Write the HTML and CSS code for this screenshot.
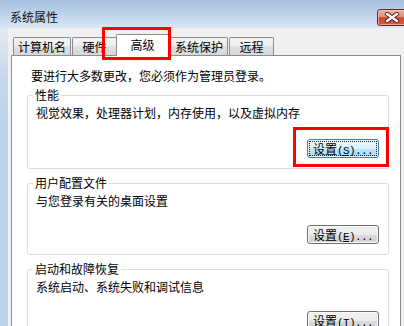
FILE: index.html
```html
<!DOCTYPE html>
<html lang="zh-CN">
<head>
<meta charset="utf-8">
<title>系统属性</title>
<link rel="stylesheet" href="styles.css">
</head>
<body>
<div class="window">
  <header class="titlebar">
    <span class="title">系统属性</span>
    <button class="close" aria-label="关闭">
      <svg width="28" height="15" viewBox="0 0 28 15">
        <path d="M9 4 L19 11 M19 4 L9 11" stroke="#5a1e14" stroke-width="4" stroke-linecap="round"/>
        <path d="M9 4 L19 11 M19 4 L9 11" stroke="#ffffff" stroke-width="2.2" stroke-linecap="round"/>
      </svg>
    </button>
  </header>
  <div class="frame">
    <div class="frame-edge"></div>
    <div class="client">
      <div class="tabs">
        <div class="tab">计算机名</div>
        <div class="tab">硬件</div>
        <div class="tab active">高级</div>
        <div class="tab">系统保护</div>
        <div class="tab">远程</div>
      </div>
      <div class="panel">
        <p class="intro">要进行大多数更改，您必须作为管理员登录。</p>
        <fieldset class="group group-perf">
          <legend>性能</legend>
          <p>视觉效果，处理器计划，内存使用，以及虚拟内存</p>
          <div class="actions"><button class="btn default">设置<span class="acc">(<u>S</u>)...</span></button></div>
        </fieldset>
        <fieldset class="group">
          <legend>用户配置文件</legend>
          <p>与您登录有关的桌面设置</p>
          <div class="actions"><button class="btn">设置<span class="acc">(<u>E</u>)...</span></button></div>
        </fieldset>
        <fieldset class="group">
          <legend>启动和故障恢复</legend>
          <p>系统启动、系统失败和调试信息</p>
          <div class="actions"><button class="btn">设置<span class="acc">(<u>T</u>)...</span></button></div>
        </fieldset>
      </div>
    </div>
  </div>
  <div class="highlight hl-tab"></div>
  <div class="highlight hl-btn"></div>
</div>
</body>
</html>
```

FILE: styles.css
```css
html, body {
  margin: 0;
  padding: 0;
}

body {
  width: 404px;
  height: 326px;
  overflow: hidden;
  font-family: "Noto Sans CJK SC", "Noto Sans", sans-serif;
  font-size: 12px;
  line-height: 14px;
  color: #000;
  background: #f0f0f0;
}

.window {
  position: relative;
  height: 326px;
  display: flex;
  flex-direction: column;
}

.titlebar {
  height: 28px;
  flex: none;
  display: flex;
  align-items: flex-start;
  background: linear-gradient(to bottom, #a4bfdf 0%, #c2d5eb 55%, #d9e5f2 100%);
}

.title {
  padding: 10px 0 0 10px;
  line-height: 14px;
  color: #111;
}

.close {
  margin: 9px -3px 0 auto;
  width: 30px;
  height: 17px;
  padding: 0;
  box-sizing: border-box;
  border: 1px solid #6b2a1e;
  border-radius: 3px;
  background: linear-gradient(to bottom, #eab1a3 0%, #df8e7c 45%, #c8482f 52%, #d4604a 100%);
  box-shadow: inset 0 0 0 1px rgba(255, 210, 200, 0.55);
  display: flex;
  align-items: center;
  justify-content: center;
}

.close svg {
  display: block;
}

.frame {
  flex: 1;
  display: flex;
  min-height: 0;
}

.frame-edge {
  width: 8px;
  flex: none;
  background: linear-gradient(to bottom, #e6eaef 0px, #c6d8ec 50px, #b9d1ea 110px, #b9d1ea 100%);
}

.client {
  flex: 1;
  min-width: 0;
  background: #f0f0f0;
  padding: 6px 3px 0 3px;
  display: flex;
  flex-direction: column;
}

.tabs {
  height: 21px;
  flex: none;
  display: flex;
  align-items: flex-end;
  padding-left: 2px;
  position: relative;
  z-index: 1;
}

.tab {
  box-sizing: border-box;
  height: 18px;
  min-width: 45px;
  padding: 0 4px;
  margin-right: 1px;
  border: 1px solid #898c95;
  border-bottom: none;
  border-radius: 2px 2px 0 0;
  background: linear-gradient(to bottom, #f6f6f6 0%, #ededed 50%, #e1e1e1 50%, #d7d7d7 100%);
  text-align: center;
  line-height: 17px;
  white-space: nowrap;
}

.tab.active {
  height: 22px;
  min-width: 53px;
  margin: 0 1px -1px -2px;
  background: #fff;
  line-height: 20px;
}

.panel {
  flex: 1;
  background: #fff;
  border: 1px solid #898c95;
  border-bottom: none;
  padding: 13px 11px 0 15px;
}

.intro {
  margin: 0;
  padding-left: 4px;
}

.group {
  margin: 7px 0 0;
  padding: 4px 9px 10px 8px;
  border: 1px solid #d5dfe5;
  border-radius: 3px;
  min-width: 0;
}

.group-perf {
  margin-top: 5px;
}

.group legend {
  padding: 0 2px;
  margin-left: -3px;
  line-height: 14px;
}

.group p {
  margin: 0;
}

.actions {
  display: flex;
  justify-content: flex-end;
  margin-top: 17px;
}

.group-perf .actions {
  margin-top: 19px;
}

.btn {
  box-sizing: border-box;
  width: 72px;
  height: 19px;
  padding: 0;
  font-family: inherit;
  font-size: 12px;
  line-height: 17px;
  color: #000;
  border: 1px solid #707070;
  border-radius: 3px;
  background: linear-gradient(to bottom, #f2f2f2 0%, #ebebeb 50%, #dddddd 50%, #cfcfcf 100%);
  box-shadow: inset 0 0 0 1px #fbfbfb;
  white-space: nowrap;
}

.btn.default {
  border-color: #3c7fb1;
  background: linear-gradient(to bottom, #eaf6fd 0%, #d9f0fc 50%, #bee6fd 50%, #a7d9f5 100%);
  box-shadow: inset 0 0 0 1px #eef8ff;
  outline: 1px dotted #222;
  outline-offset: -3px;
}

.acc {
  font-family: "Liberation Mono", "DejaVu Sans Mono", monospace;
  font-size: 11px;
  letter-spacing: -0.6px;
}

.highlight {
  position: absolute;
  box-sizing: border-box;
  border: 3px solid #ff0000;
  z-index: 5;
  pointer-events: none;
}

.hl-tab {
  left: 102px;
  top: 27px;
  width: 69px;
  height: 33px;
}

.hl-btn {
  left: 293px;
  top: 127px;
  width: 96px;
  height: 40px;
}
```
